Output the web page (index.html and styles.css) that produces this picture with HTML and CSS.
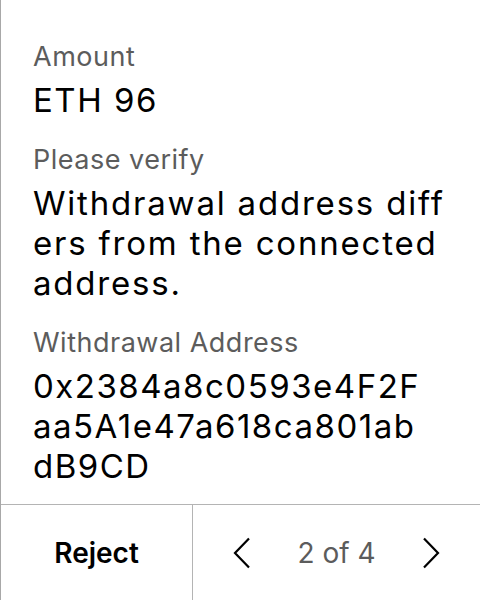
FILE: index.html
```html
<!DOCTYPE html>
<html>
<head>
<meta charset="utf-8">
<link rel="stylesheet" href="styles.css">
</head>
<body>
<div class="screen">
  <div class="content">
    <div class="field">
      <div class="label">Amount</div>
      <div class="value">ETH 96</div>
    </div>
    <div class="field">
      <div class="label">Please verify</div>
      <div class="value message">Withdrawal address differs from the connected address.</div>
    </div>
    <div class="field">
      <div class="label">Withdrawal Address</div>
      <div class="value address">0x2384a8c0593e4F2Faa5A1e47a618ca801abdB9CD</div>
    </div>
  </div>
  <div class="footer">
    <div class="reject">Reject</div>
    <div class="pager">
      <svg class="chev" width="18" height="32" viewBox="0 0 18 32"><path d="M16 1.5 L2 16 L16 30.5" fill="none" stroke="#000" stroke-width="2.2"/></svg>
      <span class="count">2 of 4</span>
      <svg class="chev" width="18" height="32" viewBox="0 0 18 32"><path d="M2 1.5 L16 16 L2 30.5" fill="none" stroke="#000" stroke-width="2.2"/></svg>
    </div>
  </div>
</div>
</body>
</html>
```
FILE: styles.css
```css
html, body {
  margin: 0;
  padding: 0;
  background: #fff;
}
.screen {
  width: 480px;
  height: 600px;
  box-sizing: border-box;
  border-left: 1px solid #a8a8a8;
  display: flex;
  flex-direction: column;
  font-family: Inter, "Noto Sans", sans-serif;
}
.content {
  flex: 1;
  padding: 41px 32px 0 32px;
  display: flex;
  flex-direction: column;
  gap: 24px;
}
.label {
  font-size: 27px;
  line-height: 32px;
  letter-spacing: 0.5px;
  color: #5c5c5c;
  margin-bottom: 7px;
}
.value {
  font-size: 33px;
  line-height: 40px;
  letter-spacing: 1.5px;
  color: #000;
  word-break: break-all;
}
.message {
  letter-spacing: 1.8px;
}
.address {
  max-width: 400px;
}
.footer {
  height: 96px;
  box-sizing: border-box;
  border-top: 1px solid #b4b4b4;
  display: grid;
  grid-template-columns: 192px 1fr;
}
.reject {
  display: flex;
  align-items: center;
  justify-content: center;
  font-size: 28px;
  font-weight: 600;
  color: #000;
  border-right: 1px solid #b4b4b4;
}
.pager {
  display: flex;
  align-items: center;
  justify-content: center;
  gap: 46px;
}
.count {
  font-size: 28px;
  color: #5c5c5c;
}
.chev {
  display: block;
}
```
